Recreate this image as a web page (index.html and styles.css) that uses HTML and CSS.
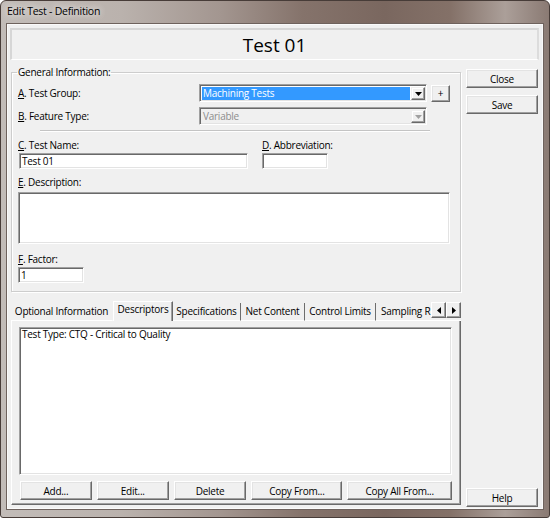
FILE: index.html
```html
<!DOCTYPE html>
<html>
<head>
<meta charset="utf-8">
<title>Edit Test - Definition</title>
<link rel="stylesheet" href="styles.css">
</head>
<body>
<div class="window">
  <div class="titlebar"><span class="title">Edit Test - Definition</span></div>
  <div class="client">
    <div class="header">Test 01</div>
    <div class="body">
      <div class="leftcol">
        <fieldset class="group">
          <legend>General Information:</legend>
          <div class="row row-a">
            <span class="lbl"><u>A</u>. Test Group:</span>
            <div class="combo">
              <div class="combo-text sel">Machining Tests</div>
              <div class="drop"><svg width="7" height="4" viewBox="0 0 7 4"><path d="M0 0H7L3.5 4Z"/></svg></div>
            </div>
            <button class="btn plus">+</button>
          </div>
          <div class="row row-b">
            <span class="lbl"><u>B</u>. Feature Type:</span>
            <div class="combo disabled">
              <div class="combo-text">Variable</div>
              <div class="drop"><svg width="7" height="4" viewBox="0 0 7 4"><path d="M0 0H7L3.5 4Z"/></svg></div>
            </div>
          </div>
          <div class="sep"></div>
          <div class="row-cd">
            <div class="field f-name">
              <span class="flabel"><u>C</u>. Test Name:</span>
              <div class="input">Test 01</div>
            </div>
            <div class="field f-abbr">
              <span class="flabel"><u>D</u>. Abbreviation:</span>
              <div class="input"></div>
            </div>
          </div>
          <div class="field f-desc">
            <span class="flabel"><u>E</u>. Description:</span>
            <div class="input textarea"></div>
          </div>
          <div class="field f-factor">
            <span class="flabel"><u>F</u>. Factor:</span>
            <div class="input">1</div>
          </div>
        </fieldset>
        <div class="tabstrip">
          <div class="tablist">
            <div class="tab t-opt">Optional Information</div>
            <div class="tab t-desc active">Descriptors</div>
            <div class="tab t-spec">Specifications</div>
            <div class="tab t-net">Net Content</div>
            <div class="tab t-ctrl">Control Limits</div>
            <div class="tab t-samp">Sampling R</div>
          </div>
          <div class="scroller">
            <div class="sbtn"><svg width="4" height="7" viewBox="0 0 4 7"><path d="M4 0V7L0 3.5Z"/></svg></div>
            <div class="sbtn"><svg width="4" height="7" viewBox="0 0 4 7"><path d="M0 0V7L4 3.5Z"/></svg></div>
          </div>
        </div>
        <div class="panel">
          <div class="listbox">Test Type: CTQ - Critical to Quality</div>
          <div class="btnrow">
            <button class="btn b-add">Add...</button>
            <button class="btn b-edit">Edit...</button>
            <button class="btn b-del">Delete</button>
            <button class="btn b-copy">Copy From...</button>
            <button class="btn b-copyall">Copy All From...</button>
          </div>
        </div>
      </div>
      <div class="rightcol">
        <button class="btn side">Close</button>
        <button class="btn side">Save</button>
        <button class="btn side help">Help</button>
      </div>
    </div>
  </div>
</div>
</body>
</html>
```

FILE: styles.css
```css
* { box-sizing: border-box; }
html, body { margin: 0; padding: 0; background: #ffffff; }
body {
  font-family: "Open Sans", "Segoe UI", sans-serif;
  font-size: 10px;
  line-height: 12px;
  letter-spacing: -0.25px;
  color: #000;
}
u { text-decoration: underline; text-underline-offset: 1px; }

.window {
  width: 550px;
  height: 518px;
  border: 1px solid #473c38;
  border-radius: 6px 6px 3px 3px;
  padding: 0 6px 8px 6px;
  display: flex;
  flex-direction: column;
  background: linear-gradient(90deg, #c2bcb8 0%, #bab2ad 22%, #a39690 40%, #85736b 55%, #7a675f 70%, #847168 82%, #ab9f99 92%, #8a7a73 100%);
}
.titlebar {
  height: 23px;
  padding-bottom: 3px;
  display: flex;
  align-items: center;
}
.title {
  font-size: 10.5px;
  color: #000;
  text-shadow: 0 0 6px rgba(255,255,255,0.9), 0 0 10px rgba(255,255,255,0.6);
}

.client {
  flex: 1;
  background: #f0f0f0;
  border: 1px solid #fafafa;
  box-shadow: 0 0 0 1px #6e625d;
  padding: 3px 3px 0 2px;
  display: flex;
  flex-direction: column;
}
.header {
  height: 32px;
  border-style: solid;
  border-width: 2px 2px 1px 2px;
  border-color: #d6d6d6 #dcdcdc #ffffff #d6d6d6;
  font-size: 19px;
  letter-spacing: 0;
  display: flex;
  align-items: center;
  justify-content: center;
}
.body {
  flex: 1;
  display: flex;
  gap: 5px;
  padding: 0 1px;
}
.leftcol {
  width: 450px;
  padding-top: 6px;
  display: flex;
  flex-direction: column;
}
.rightcol {
  width: 72px;
  padding-top: 9px;
  padding-bottom: 1px;
  display: flex;
  flex-direction: column;
  gap: 7px;
}
.rightcol .help { margin-top: auto; }

.btn {
  font: inherit;
  letter-spacing: inherit;
  color: #000;
  height: 19px;
  padding: 0;
  background: #f0f0f0;
  border: 1px solid;
  border-color: #ffffff #696969 #696969 #ffffff;
  box-shadow: inset -1px -1px 0 #a0a0a0, inset 1px 1px 0 #e3e3e3;
  display: flex;
  align-items: center;
  justify-content: center;
}
.side { width: 72px; }

/* group box */
.group {
  margin: 0;
  padding: 0 6px 8px 6px;
  border: 1px solid #cdcdcd;
  box-shadow: inset 1px 1px 0 #ffffff, 1px 1px 0 #ffffff;
  min-width: 0;
}
.group legend {
  padding: 0 1px;
  margin-left: -1px;
  line-height: 12px;
}
.row { display: flex; align-items: center; height: 18px; }
.row-a { margin-top: 6px; }
.row-b { margin-top: 5px; }
.lbl { width: 181px; }

.combo {
  width: 228px;
  height: 18px;
  display: flex;
  gap: 1px;
  padding: 1px;
  background: #ffffff;
  border: 1px solid;
  border-color: #a0a0a0 #ffffff #ffffff #a0a0a0;
  box-shadow: inset 1px 1px 0 #696969, inset -1px -1px 0 #e3e3e3;
}
.combo-text {
  flex: 1;
  margin: 1px 0 0 1px;
  padding-left: 1px;
  line-height: 13px;
}
.combo-text.sel { background: #3399ff; color: #ffffff; }
.drop {
  width: 14px;
  margin-top: 1px;
  background: #f0f0f0;
  border: 1px solid;
  border-color: #f0f0f0 #696969 #696969 #f0f0f0;
  box-shadow: inset -1px -1px 0 #a0a0a0, inset 1px 1px 0 #ffffff;
  display: flex;
  align-items: center;
  justify-content: center;
}
.drop svg { fill: #000; }
.combo.disabled { background: #f0f0f0; }
.combo.disabled .combo-text { color: #8d8d8d; }
.combo.disabled .drop svg { fill: #a0a0a0; }
.plus {
  width: 19px;
  height: 17px;
  margin-left: 4px;
  font-size: 10px;
}

.sep {
  margin: 5px 0 0 22px;
  width: 390px;
  height: 2px;
  border-top: 1px solid #c4c4c4;
  border-bottom: 1px solid #ffffff;
}

.row-cd { display: flex; margin-top: 7px; }
.flabel { display: block; height: 12px; margin-bottom: 2px; }
.f-name { width: 244px; }
.f-name .input { width: 229px; margin-left: 1px; }
.f-abbr .input { width: 66px; }
.f-desc { margin-top: 7px; }
.f-desc .flabel { margin-bottom: 4px; }
.textarea { width: 432px; height: 52px !important; }
.f-factor { margin-top: 9px; }
.f-factor .input { width: 66px; }

.input {
  height: 16px;
  background: #ffffff;
  border: 1px solid;
  border-color: #a0a0a0 #ffffff #ffffff #a0a0a0;
  box-shadow: inset 1px 1px 0 #696969, inset -1px -1px 0 #e3e3e3;
  padding: 1px 0 0 2px;
  line-height: 12px;
}

/* tabs */
.tabstrip {
  margin-top: 9px;
  height: 20px;
  display: flex;
  align-items: flex-end;
}
.tablist {
  flex: 1;
  height: 20px;
  display: flex;
  align-items: flex-end;
  min-width: 0;
}
.tab {
  flex-shrink: 0;
  height: 18px;
  padding-top: 2px;
  text-align: center;
  white-space: nowrap;
  border-right: 1px solid #6d6d6d;
  border-bottom: 1px solid #ffffff;
}
.t-opt { width: 102px; border-right-color: transparent; }
.t-desc { width: 60px; }
.t-spec { width: 68px; }
.t-net { width: 64px; }
.t-ctrl { width: 71px; }
.t-samp { flex: 1; flex-shrink: 1; text-align: left; padding-left: 5px; border-right: none; }
.tab.active {
  height: 20px;
  padding-top: 1px;
  border-top: 1px solid #ffffff;
  border-left: 1px solid #ffffff;
  border-right: 1px solid #696969;
  border-bottom: none;
  box-shadow: inset -1px 0 0 #a0a0a0;
}
.scroller {
  width: 30px;
  height: 20px;
  display: flex;
  padding-top: 1px;
  border-bottom: 1px solid #ffffff;
}
.sbtn {
  width: 15px;
  height: 16px;
  background: #f0f0f0;
  border: 1px solid;
  border-color: #ffffff #696969 #696969 #ffffff;
  box-shadow: inset -1px -1px 0 #a0a0a0;
  display: flex;
  align-items: center;
  justify-content: center;
}
.sbtn svg { fill: #000; }

.panel {
  border-left: 1px solid #ffffff;
  border-right: 1px solid #696969;
  border-bottom: 1px solid #696969;
  box-shadow: inset -1px -1px 0 #a0a0a0;
  padding: 6px 8px 4px 7px;
}
.listbox {
  height: 148px;
  background: #ffffff;
  border: 1px solid;
  border-color: #a0a0a0 #ffffff #ffffff #a0a0a0;
  box-shadow: inset 1px 1px 0 #696969, inset -1px -1px 0 #e3e3e3;
  padding: 1px 2px 0 2px;
  line-height: 11px;
}
.btnrow {
  display: flex;
  gap: 5px;
  margin-top: 6px;
  padding-left: 1px;
}
.b-add { width: 72px; }
.b-edit { width: 72px; }
.b-del { width: 73px; }
.b-copy { width: 91px; }
.b-copyall { width: 105px; }
```
